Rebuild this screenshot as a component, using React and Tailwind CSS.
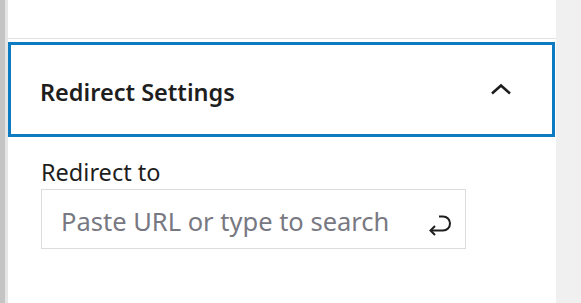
export default function App() {
  return (
    <div className="flex h-[303px] w-[581px] overflow-hidden bg-white" style={{ fontFamily: '"Noto Sans", "Open Sans", sans-serif' }}>
      <div className="w-[5px] bg-[#c4c4c4]" />
      <div className="w-[3px] bg-[#e6e6e6]" />
      <div className="flex w-[548px] flex-col bg-white">
        <div className="h-[39px] border-b border-[#e2e2e2]" />
        <div className="mr-[1px] mt-[3px] flex h-[95px] items-center justify-between border-[3px] border-[#0e7bc0] pl-[29px] pr-[40px] pt-[5px]">
          <span className="text-[23.5px] font-semibold leading-[30px] text-[#1e1e1e]">Redirect Settings</span>
          <svg width="22" height="12" viewBox="0 0 22 12" className="mt-[-7px]">
            <polyline points="2,10.5 11,2.5 20,10.5" fill="none" stroke="#1e1e1e" strokeWidth="2.6" />
          </svg>
        </div>
        <div className="flex flex-col pl-[33px] pt-[20px]">
          <label className="text-[23.5px] leading-[30px] text-[#1e1e1e]">Redirect to</label>
          <div className="mt-[2px] flex h-[60px] w-[425px] items-center border border-[#dcdcdc] pl-[19px] pr-[12px] pt-[4px]">
            <span className="flex-1 text-[25.5px] leading-[34px] text-[#787882]">Paste URL or type to search</span>
            <svg width="26" height="24" viewBox="0 0 26 24" className="mt-[5px]">
              <path d="M12 4.5 H16 C20 4.5 23 7.5 23 11.5 C23 15.5 20 18.5 16 18.5 H4" fill="none" stroke="#1e1e1e" strokeWidth="2" />
              <polyline points="8,14 3.5,18.5 8,23" fill="none" stroke="#1e1e1e" strokeWidth="2" />
            </svg>
          </div>
        </div>
      </div>
      <div className="flex-1 bg-[#f0f0f0]" />
    </div>
  );
}
